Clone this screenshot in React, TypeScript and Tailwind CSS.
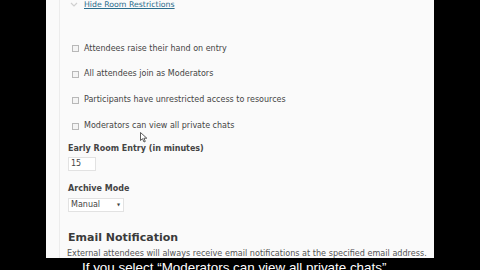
import React from "react";

const font = { fontFamily: '"DejaVu Sans", Verdana, sans-serif' };

function Check({ label }: { label: string }) {
  return (
    <div className="h-[26px] flex items-center pl-[4px]">
      <span className="w-[7px] h-[7px] border border-[#b8b8b8] bg-[#f4f4f4] mr-[5px] shrink-0" />
      <span className="text-[8px] text-[#444]">{label}</span>
    </div>
  );
}

export default function App() {
  return (
    <div className="w-[480px] h-[270px] bg-black overflow-hidden flex flex-col" style={font}>
      <div className="flex h-[258px] shrink-0">
        <div className="w-[46px] shrink-0" />
        <div className="w-[388px] shrink-0 bg-[#fafafa] relative pl-[13px]">
          <div className="h-full border-l border-[#ececec] pl-[8px] flex flex-col">
            <div className="h-[10px] flex items-center pl-[2px]">
              <svg width="8" height="6" viewBox="0 0 8 6" className="mr-[6px]">
                <path d="M1 1 L4 4 L7 1" fill="none" stroke="#d0d0d0" strokeWidth="1.2" />
              </svg>
              <span className="text-[7.8px] text-[#2b6c8c] underline">Hide Room Restrictions</span>
            </div>
            <div className="h-[26px]" />
            <Check label="Attendees raise their hand on entry" />
            <Check label="All attendees join as Moderators" />
            <Check label="Participants have unrestricted access to resources" />
            <Check label="Moderators can view all private chats" />
            <div className="mt-[4px] h-[12px] flex items-center text-[8px] font-semibold text-[#444]">
              Early Room Entry (in minutes)
            </div>
            <div className="mt-[2px] w-[28px] h-[14px] border border-[#e2e2e2] bg-white flex items-center pl-[2px] text-[8px] text-[#444]">
              15
            </div>
            <div className="mt-[12px] h-[12px] flex items-center text-[8px] font-semibold text-[#444]">
              Archive Mode
            </div>
            <div className="mt-[3px] w-[56px] h-[14px] border border-[#e2e2e2] bg-white flex items-center justify-between pl-[2px] pr-[3px] text-[8px] text-[#444]">
              <span>Manual</span>
              <span className="text-[4px]">▼</span>
            </div>
            <div className="mt-[19px] h-[14px] flex items-center text-[11px] font-bold text-[#3a3a3a]">
              Email Notification
            </div>
            <div className="mt-[3px] h-[10px] flex items-center text-[8.1px] text-[#555] whitespace-nowrap -ml-[1px]">
              External attendees will always receive email notifications at the specified email address.
            </div>
          </div>
          <svg width="8" height="11" viewBox="0 0 8 11" className="absolute left-[94px] top-[132px]">
            <path d="M0.5 0.5 L0.5 8.5 L2.5 6.7 L4 10 L5.3 9.4 L3.9 6.2 L6.8 6.2 Z" fill="white" stroke="#333" strokeWidth="0.8" />
          </svg>
        </div>
        <div className="flex-1" />
      </div>
      <div
        className="pl-[82px] pt-[2px] text-white text-[13.4px] leading-[16px] whitespace-nowrap"
        style={{ fontFamily: '"Liberation Sans", Arial, sans-serif' }}
      >
        If you select “Moderators can view all private chats”
      </div>
    </div>
  );
}
